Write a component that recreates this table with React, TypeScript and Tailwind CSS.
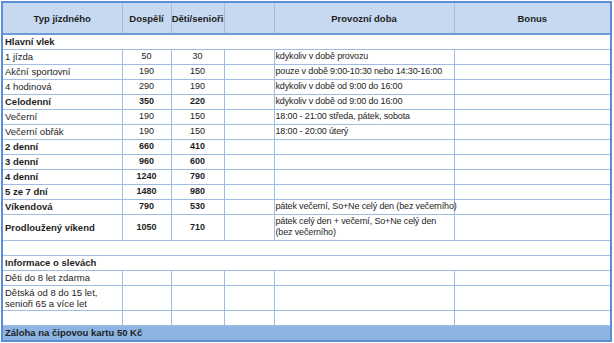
import React from "react";

type Row = {
  name: string | React.ReactNode;
  adult?: string;
  child?: string;
  time?: string | React.ReactNode;
  bold?: boolean;
  tall?: boolean;
};

const rows: Row[] = [
  { name: "1 jízda", adult: "50", child: "30", time: "kdykoliv v době provozu" },
  { name: "Akční sportovní", adult: "190", child: "150", time: "pouze v době 9:00-10:30 nebo 14:30-16:00" },
  { name: "4 hodinová", adult: "290", child: "190", time: "kdykoliv v době od 9:00 do 16:00" },
  { name: "Celodenní", adult: "350", child: "220", time: "kdykoliv v době od 9:00 do 16:00", bold: true },
  { name: "Večerní", adult: "190", child: "150", time: "18:00 - 21:00 středa, pátek, sobota" },
  { name: "Večerní obřák", adult: "190", child: "150", time: "18:00 - 20:00 úterý" },
  { name: "2 denní", adult: "660", child: "410", bold: true },
  { name: "3 denní", adult: "960", child: "600", bold: true },
  { name: "4 denní", adult: "1240", child: "790", bold: true },
  { name: "5 ze 7 dní", adult: "1480", child: "980", bold: true },
  { name: "Víkendová", adult: "790", child: "530", time: "pátek večerní, So+Ne celý den (bez večerního)", bold: true },
  {
    name: "Prodloužený víkend",
    adult: "1050",
    child: "710",
    time: (
      <>
        pátek celý den + večerní, So+Ne celý den
        <br />
        (bez večerního)
      </>
    ),
    bold: true,
    tall: true,
  },
];

const line = "border-b border-[#9fbde3]";
const vline = "border-r border-[#9fbde3]";

function DataRow({ r }: { r: Row }) {
  const h = r.tall ? "h-[26px]" : "h-[15px]";
  const w = r.bold ? "font-bold" : "font-normal";
  return (
    <tr className={`${h} ${line}`}>
      <td className={`${vline} pl-[2px] text-[9.5px] ${w}`}>{r.name}</td>
      <td className={`${vline} text-center ${w}`}>{r.adult}</td>
      <td className={`${vline} text-center ${w}`}>{r.child}</td>
      <td className={vline}></td>
      <td className={`${vline} pl-[1px] tracking-[-0.15px]`}>{r.time}</td>
      <td></td>
    </tr>
  );
}

function EmptyRow({ tall, text }: { tall?: boolean; text?: React.ReactNode }) {
  return (
    <tr className={`${tall ? "h-[25px]" : "h-[15px]"} ${line}`}>
      <td className={`${vline} pl-[2px] text-[9.5px]`}>{text}</td>
      <td className={vline}></td>
      <td className={vline}></td>
      <td className={vline}></td>
      <td className={vline}></td>
      <td></td>
    </tr>
  );
}

export default function App() {
  return (
    <div className="w-[614px] h-[343px] bg-white pl-[1px] pt-[1px] overflow-hidden">
      <div
        className="w-[611px] border-2 border-[#5b8ed6] text-[9px] leading-[11px] whitespace-nowrap text-[#1e1e1e]"
        style={{ fontFamily: '"Liberation Sans", Arial, sans-serif' }}
      >
        <table className="w-full table-fixed border-collapse">
          <colgroup>
            <col className="w-[119px]" />
            <col className="w-[49px]" />
            <col className="w-[53px]" />
            <col className="w-[50px]" />
            <col className="w-[180px]" />
            <col />
          </colgroup>
          <thead>
            <tr className="h-[31px] bg-[#c6d9f1] border-b-2 border-[#6f9ad8] font-bold text-[9.5px]">
              <td className={`${vline} text-center`}>Typ jízdného</td>
              <td className={`${vline} text-center`}>Dospělí</td>
              <td className={`${vline} text-center`}>Děti/senioři</td>
              <td className={vline}></td>
              <td className={`${vline} text-center`}>Provozní doba</td>
              <td className="text-center">Bonus</td>
            </tr>
          </thead>
          <tbody>
            <tr className={`h-[15px] ${line}`}>
              <td colSpan={6} className="pl-[2px] font-bold text-[9.5px]">
                Hlavní vlek
              </td>
            </tr>
            {rows.map((r, i) => (
              <DataRow key={i} r={r} />
            ))}
            <tr className={`h-[15px] ${line}`}>
              <td colSpan={6}></td>
            </tr>
            <tr className={`h-[15px] ${line}`}>
              <td colSpan={6} className="pl-[2px] font-bold text-[9.5px]">
                Informace o slevách
              </td>
            </tr>
            <EmptyRow text="Děti do 8 let zdarma" />
            <EmptyRow
              tall
              text={
                <>
                  Dětská od 8 do 15 let,
                  <br />
                  senioři 65 a více let
                </>
              }
            />
            <EmptyRow />
            <tr className="h-[15px] bg-[#8db4e3] border-t border-[#6f9ad8]">
              <td colSpan={6} className="pl-[2px] font-bold text-[9.5px]">
                Záloha na čipovou kartu 50 Kč
              </td>
            </tr>
          </tbody>
        </table>
      </div>
    </div>
  );
}
